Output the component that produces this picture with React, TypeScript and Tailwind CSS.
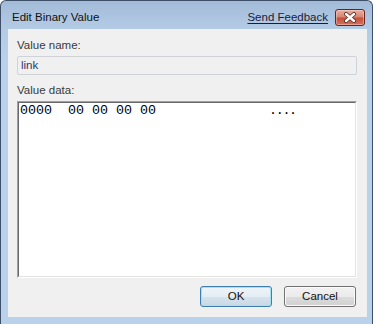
import React from "react";

const UI_FONT = "font-['Liberation_Sans','Segoe_UI',Arial,sans-serif]";

function CloseButton() {
  return (
    <div className="w-[30px] h-[17px] rounded-[3px] border border-[#6b241c] bg-[linear-gradient(#eab0a3_0%,#d88674_45%,#c4503c_55%,#d27360_100%)] shadow-[inset_0_0_0_1px_rgba(255,220,210,0.45)] flex items-center justify-center">
      <svg width="14" height="11" viewBox="0 0 14 11">
        <path d="M3 2 L11 9 M11 2 L3 9" stroke="#5a2a24" strokeWidth="4" strokeLinecap="round" />
        <path d="M3 2 L11 9 M11 2 L3 9" stroke="#ffffff" strokeWidth="2.4" strokeLinecap="round" />
      </svg>
    </div>
  );
}

function DialogButton({ label, primary }: { label: string; primary?: boolean }) {
  return (
    <button
      type="button"
      className={`w-[72px] h-[21px] rounded-[3px] border text-[11.5px] leading-none text-[#111] ${UI_FONT} ${
        primary
          ? "border-[#3c7fb1] bg-[linear-gradient(#eef5fa_0%,#e4edf4_50%,#d5e3ed_50%,#c9d9e4_100%)] shadow-[inset_0_0_0_1px_#9fe2f7]"
          : "border-[#707070] bg-[linear-gradient(#f2f2f2_0%,#ebebeb_50%,#dddddd_50%,#cfcfcf_100%)] shadow-[inset_0_0_0_1px_#fbfbfb]"
      }`}
    >
      {label}
    </button>
  );
}

export default function App() {
  return (
    <div className="w-[375px] h-[324px] bg-white overflow-hidden">
      <div className="w-[373px] h-[340px] rounded-t-[6px] border border-b-0 border-[#3e5068] bg-[linear-gradient(#a2bbd8_0px,#b4cbe5_28px,#b9d1ea_60px)] flex flex-col">
        {/* title bar */}
        <div className="h-[28px] flex items-start pl-[11px] pr-[7px]">
          <span className={`mt-[9px] text-[11.5px] leading-[15px] text-[#111] ${UI_FONT}`}>Edit Binary Value</span>
          <span className={`ml-auto mt-[9px] text-[11.5px] leading-[15px] text-[#1b1b3a] underline underline-offset-[2px] ${UI_FONT}`}>
            Send Feedback
          </span>
          <div className="ml-[7px] mt-[8px]">
            <CloseButton />
          </div>
        </div>

        {/* client area */}
        <div className="ml-[7px] mr-[5px] h-[288px] bg-[#f0f0f0] pl-[9px] pr-[10px] flex flex-col">
          <div className={`mt-[9px] text-[11.5px] leading-[15px] text-[#3a3a3a] ${UI_FONT}`}>Value name:</div>
          <div className="mt-[3px] h-[19px] rounded-[2px] border border-[#cfd3d7] bg-[#f0f0f0] flex items-center pl-[3px]">
            <span className={`text-[11.5px] leading-none text-[#34346e] ${UI_FONT}`}>link</span>
          </div>
          <div className={`mt-[8px] text-[11.5px] leading-[15px] text-[#3a3a3a] ${UI_FONT}`}>Value data:</div>
          <div className="mt-[3px] h-[177px] border border-t-[#a0a0a0] border-l-[#a0a0a0] border-r-white border-b-white">
            <div className="h-full border border-t-[#696969] border-l-[#696969] border-r-[#e3e3e3] border-b-[#e3e3e3] bg-white pl-[1px] pt-[1px] flex items-start">
              <span className="font-['Liberation_Mono','Courier_New',monospace] text-[13.33px] leading-[14px] text-black whitespace-pre">
                {"0000  00 00 00 00"}
              </span>
              <span className="ml-[113px] font-['Liberation_Mono','Courier_New',monospace] text-[13.33px] tracking-[-1.3px] leading-[14px] text-black whitespace-pre">
                {"...."}
              </span>
            </div>
          </div>
          <div className="mt-[8px] flex justify-end gap-[12px] pr-[1px]">
            <DialogButton label="OK" primary />
            <DialogButton label="Cancel" />
          </div>
        </div>
      </div>
    </div>
  );
}
